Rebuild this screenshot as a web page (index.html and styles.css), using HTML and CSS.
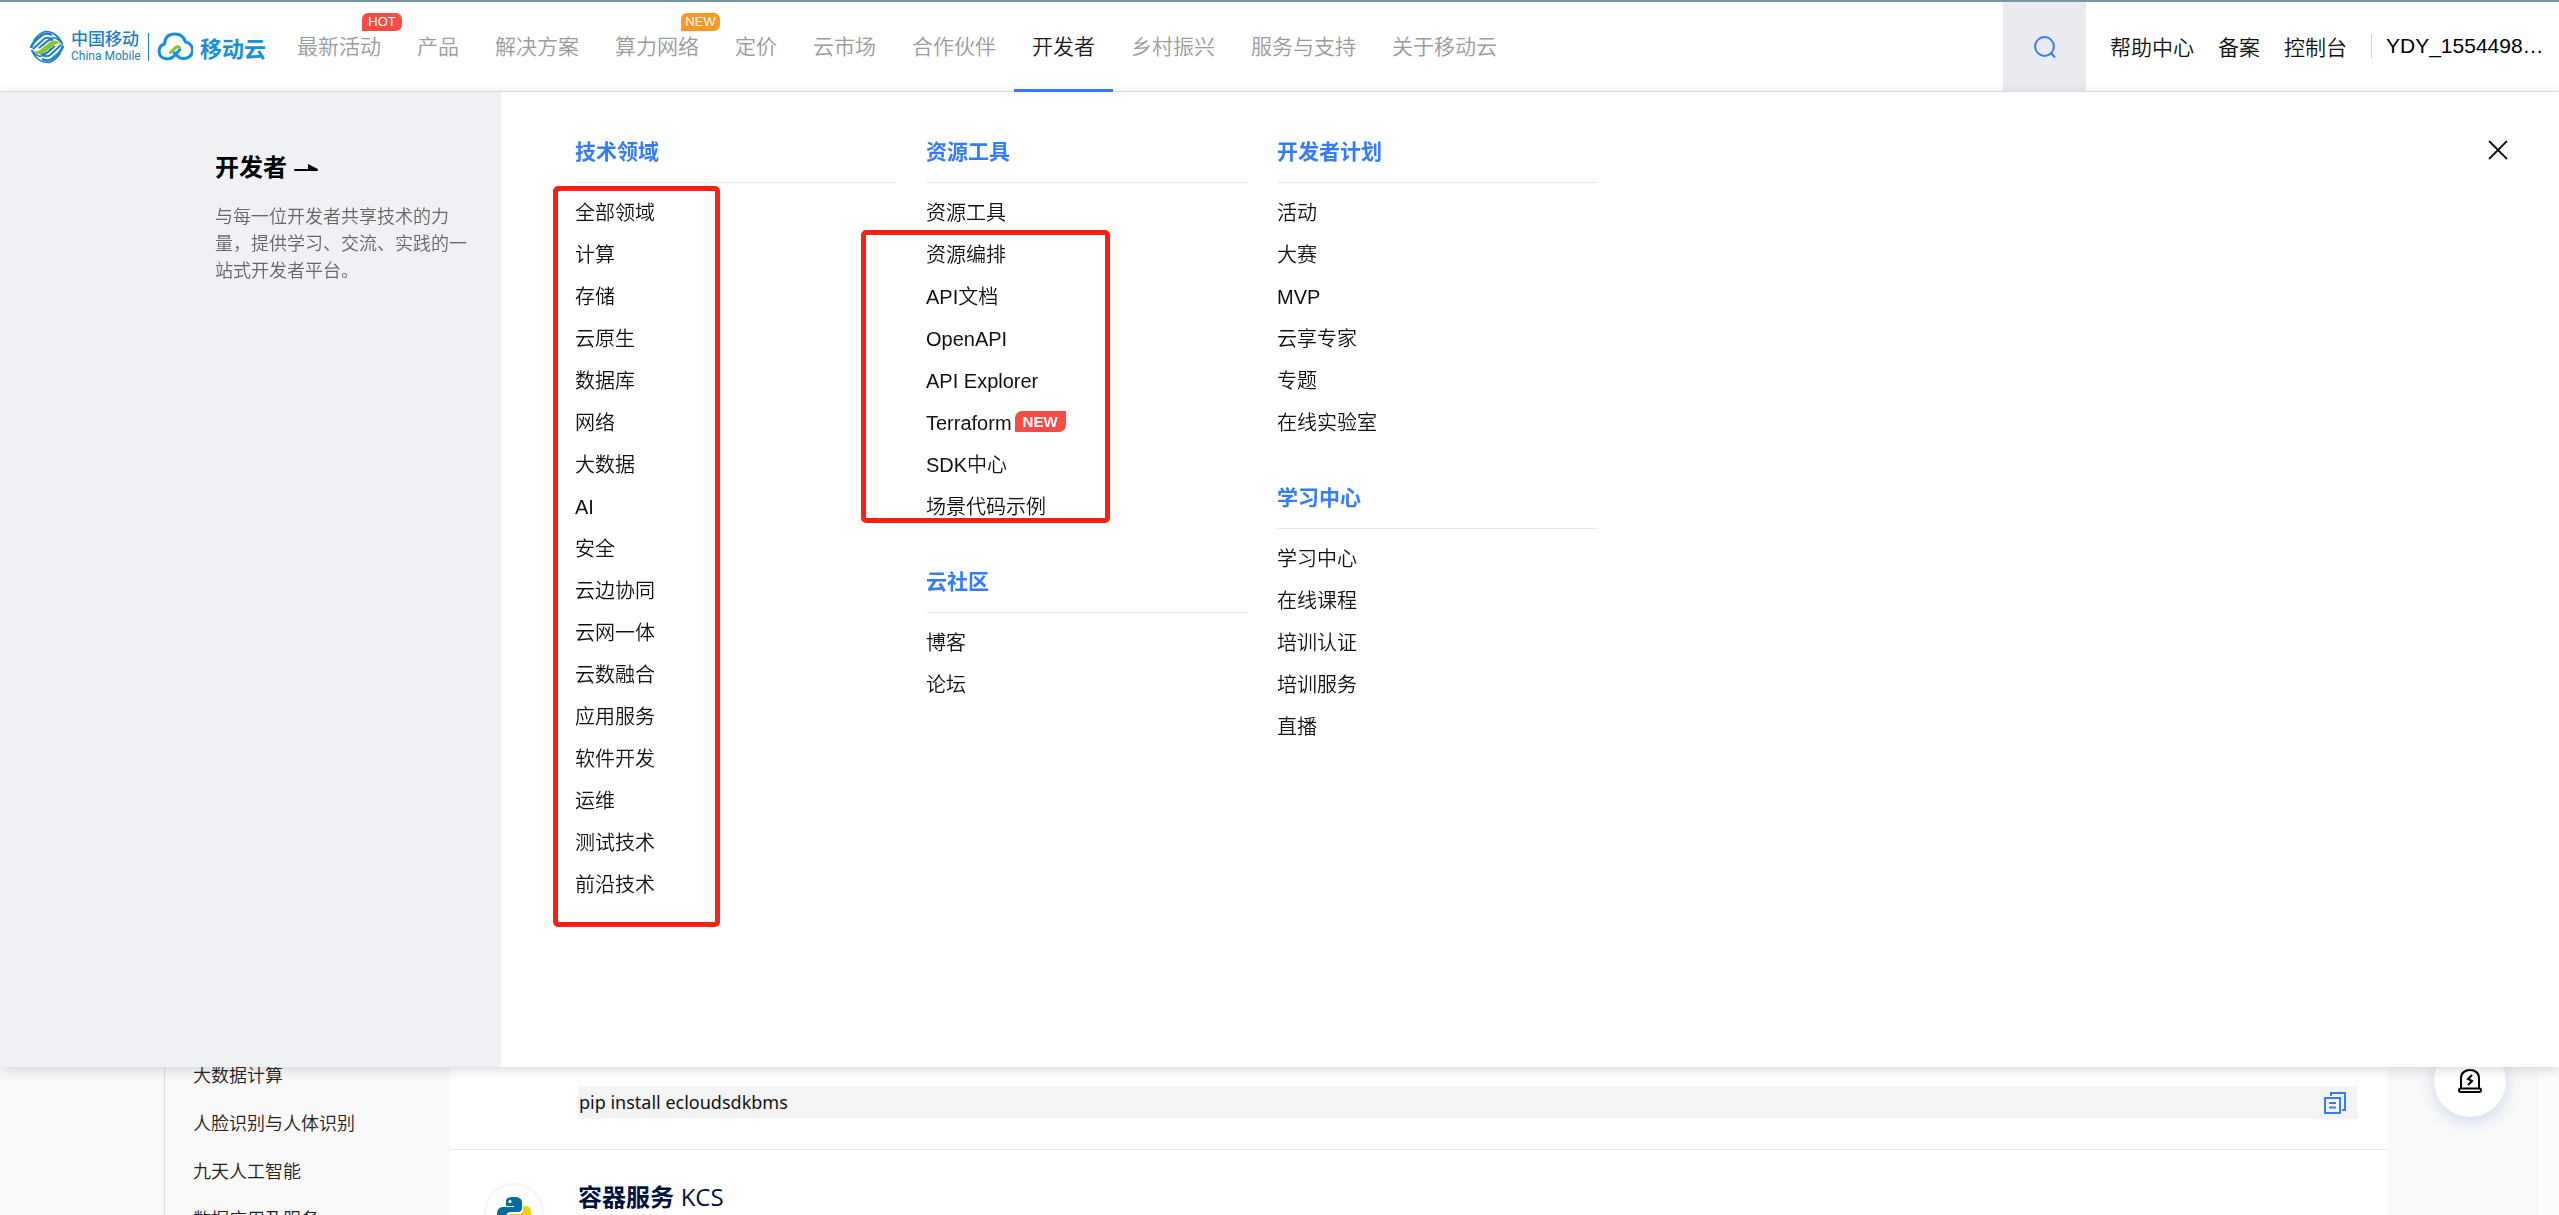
FILE: index.html
```html
<!DOCTYPE html>
<html lang="zh-CN">
<head>
<meta charset="utf-8">
<title>移动云 - 开发者</title>
<link rel="stylesheet" href="styles.css">
</head>
<body>
<header class="header">
  <a class="logo" href="#" aria-label="中国移动 移动云">
    <svg class="logo-mobile" viewBox="0 0 34 34" aria-hidden="true">
      <g fill="none" stroke="#1b80c6">
        <path d="M3.500 11 Q9 3 15 1.500 Q21 1 26 5 Q30 8 32.500 14 Q29 9 25 8 Q22 7 19 10 L12 16" stroke-width="1.500"/>
        <path d="M1 18 Q2 14 6 10 L12 5 Q17 2 22 5" stroke-width="2.600"/>
        <path d="M3 19 L14 9 Q18 6 23 10 Q19 9 16 12 L9 18" stroke-width="2"/>
        <path d="M24 4 Q30 9 33 16" stroke-width="1.200"/>
        <path d="M30.500 23 Q25 31 19 32.500 Q13 33 8 29 Q4 26 1.500 20 Q5 25 9 26 Q12 27 15 24 L22 18" stroke-width="1.500"/>
        <path d="M33 16 Q32 20 28 24 L22 29 Q17 32 12 29" stroke-width="2.600"/>
        <path d="M31 15 L20 25 Q16 28 11 24 Q15 25 18 22 L25 16" stroke-width="2"/>
      </g>
      <path d="M2 19 Q6 24 11 19 L20 12 Q26 8 32 14 Q27 12 23 16 L14 23 Q7 27 2 19Z" fill="#8cc32c"/>
    </svg>
    <span class="logo-names"><span class="logo-cn">中国移动</span><span class="logo-en">China Mobile</span></span>
    <span class="logo-line"></span>
    <svg class="logo-cloud" viewBox="0 0 36 29" aria-hidden="true">
      <g fill="none" stroke-width="3" stroke-linecap="round" stroke-linejoin="round">
        <path d="M14 26 Q11 27.500 8 26.500 A7.500 7.500 0 0 1 7.500 12 Q8 2 18 2 Q26 2 28.500 10 A8.300 8.300 0 0 1 27 26.500 Q23 27 20 23.500 L17 20.500" stroke="#1590dc"/>
        <path d="M13 26.500 Q15.500 26 18 23 L23 17.500" stroke="#1590dc"/>
        <path d="M13.500 20.500 L18 16 Q20 14 22.500 15.500" stroke="#8cc32c"/>
      </g>
    </svg>
    <span class="logo-yun">移动云</span>
  </a>
  <nav class="nav">
    <a href="#">最新活动<span class="tag tag-hot">HOT</span></a>
    <a href="#">产品</a>
    <a href="#">解决方案</a>
    <a href="#">算力网络<span class="tag tag-new">NEW</span></a>
    <a href="#">定价</a>
    <a href="#">云市场</a>
    <a href="#">合作伙伴</a>
    <a href="#" class="active">开发者</a>
    <a href="#">乡村振兴</a>
    <a href="#">服务与支持</a>
    <a href="#">关于移动云</a>
  </nav>
  <button class="search" type="button" aria-label="搜索">
    <svg width="22" height="22" viewBox="0 0 22 22" fill="none" stroke="#347cff" stroke-width="2" aria-hidden="true"><circle cx="10.500" cy="10.500" r="9.400"/><path d="M16.500 16.500 L21 21.500"/></svg>
  </button>
  <div class="tools">
    <a href="#">帮助中心</a>
    <a href="#">备案</a>
    <a href="#">控制台</a>
    <a href="#" class="user">YDY_1554498…</a>
  </div>
</header>

<section class="menu">
  <aside class="intro">
    <h2><a href="#">开发者 <svg width="26" height="10" viewBox="0 0 26 10" aria-hidden="true"><path d="M2 6 H25 L15 1 V6" fill="#000"/><path d="M2 7 H24" stroke="#000" stroke-width="2" stroke-linecap="round"/></svg></a></h2>
    <p>与每一位开发者共享技术的力量，提供学习、交流、实践的一站式开发者平台。</p>
  </aside>
  <div class="columns">
    <div class="column">
      <section class="group">
        <h3>技术领域</h3>
        <ul>
          <li><a href="#">全部领域</a></li>
          <li><a href="#">计算</a></li>
          <li><a href="#">存储</a></li>
          <li><a href="#">云原生</a></li>
          <li><a href="#">数据库</a></li>
          <li><a href="#">网络</a></li>
          <li><a href="#">大数据</a></li>
          <li><a href="#">AI</a></li>
          <li><a href="#">安全</a></li>
          <li><a href="#">云边协同</a></li>
          <li><a href="#">云网一体</a></li>
          <li><a href="#">云数融合</a></li>
          <li><a href="#">应用服务</a></li>
          <li><a href="#">软件开发</a></li>
          <li><a href="#">运维</a></li>
          <li><a href="#">测试技术</a></li>
          <li><a href="#">前沿技术</a></li>
        </ul>
      </section>
      <span class="mark mark-fields"></span>
    </div>
    <div class="column">
      <section class="group">
        <h3>资源工具</h3>
        <ul>
          <li><a href="#">资源工具</a></li>
          <li><a href="#">资源编排</a></li>
          <li><a href="#">API文档</a></li>
          <li><a href="#">OpenAPI</a></li>
          <li><a href="#">API Explorer</a></li>
          <li><a href="#">Terraform</a><span class="flag">NEW</span></li>
          <li><a href="#">SDK中心</a></li>
          <li><a href="#">场景代码示例</a></li>
        </ul>
      </section>
      <section class="group">
        <h3>云社区</h3>
        <ul>
          <li><a href="#">博客</a></li>
          <li><a href="#">论坛</a></li>
        </ul>
      </section>
      <span class="mark mark-tools"></span>
    </div>
    <div class="column">
      <section class="group">
        <h3>开发者计划</h3>
        <ul>
          <li><a href="#">活动</a></li>
          <li><a href="#">大赛</a></li>
          <li><a href="#">MVP</a></li>
          <li><a href="#">云享专家</a></li>
          <li><a href="#">专题</a></li>
          <li><a href="#">在线实验室</a></li>
        </ul>
      </section>
      <section class="group">
        <h3>学习中心</h3>
        <ul>
          <li><a href="#">学习中心</a></li>
          <li><a href="#">在线课程</a></li>
          <li><a href="#">培训认证</a></li>
          <li><a href="#">培训服务</a></li>
          <li><a href="#">直播</a></li>
        </ul>
      </section>
    </div>
  </div>
  <button class="close" type="button" aria-label="关闭">
    <svg width="20" height="20" viewBox="0 0 20 20" fill="none" stroke="#111" stroke-width="1.800" aria-hidden="true"><path d="M1 1 L19 19 M19 1 L1 19"/></svg>
  </button>
</section>

<div class="page">
  <nav class="side">
    <a href="#">大数据计算</a>
    <a href="#">人脸识别与人体识别</a>
    <a href="#">九天人工智能</a>
    <a href="#">数据应用及服务</a>
  </nav>
  <main class="content">
    <div class="install">
      <code>pip install ecloudsdkbms</code>
      <button type="button" aria-label="复制">
        <svg width="22" height="22" viewBox="0 0 22 22" fill="none" stroke="#347cff" stroke-width="2" aria-hidden="true"><path d="M7 4 V1 H21 V18 H18"/><rect x="1" y="6" width="15" height="15"/><path d="M5 11 H12 M5 15.500 H12" stroke-width="1.800"/></svg>
      </button>
    </div>
    <article class="product">
      <span class="avatar">
        <svg width="34" height="34" viewBox="0 0 34 34" aria-hidden="true">
          <path d="M17 1 C9 1 9 4 9 6 V10 H17 V11 H6 C2 11 0 14 0 18 C0 23 3 25 6 25 H9 V21 C9 18 11 16 14 16 H21 C24 16 25 14 25 12 V6 C25 3 22 1 17 1Z" fill="#0a6c9c"/>
          <circle cx="13" cy="5.500" r="1.600" fill="#fff"/>
          <path d="M17 34 C25 34 25 31 25 28 V25 H17 V24 H28 C32 24 34 21 34 17 C34 12 32 10 28 10 H26 V13 C26 16 24 18 21 18 H14 C11 18 9 20 9 22 V28 C9 32 12 34 17 34Z" fill="#ffcb05"/>
        </svg>
      </span>
      <h2>容器服务 <span>KCS</span></h2>
    </article>
  </main>
</div>
<button class="alarm" type="button" aria-label="公告">
  <svg width="26" height="26" viewBox="0 0 26 26" fill="none" stroke="#000" stroke-width="2" aria-hidden="true"><path d="M4 20 V10 C4 5 8 2 13 2 S22 5 22 10 V20"/><rect x="2" y="20.500" width="22" height="3.500" rx="1.700"/><path d="M15 7 L11 11 L15 13 L11 17"/></svg>
</button>
</body>
</html>
```
FILE: styles.css
```css
* { box-sizing: border-box; }
body {
  margin: 0;
  height: 100vh;
  overflow: hidden;
  background: #f9f9f9;
  color: #111;
  font-family: "Liberation Sans", "Noto Sans CJK SC", sans-serif;
  font-size: 20px;
  display: flex;
  flex-direction: column;
}
a { color: inherit; text-decoration: none; }
button { border: 0; padding: 0; background: none; cursor: pointer; }
ul { list-style: none; margin: 0; padding: 0; }
svg { display: block; }

/* top bar */
.header {
  flex: none;
  height: 92px;
  display: flex;
  background: #fff;
  border-top: 2px solid #7b96a3;
  border-bottom: 1px solid #e2e3e5;
  font-size: 21px;
  font-weight: 350;
}
.logo {
  width: 279px;
  padding: 0 0 0 30px;
  display: flex;
  align-items: center;
  color: #1b80c6;
  font-weight: 500;
}
.logo-mobile { width: 34px; height: 34px; }
.logo-names { margin-left: 7px; display: flex; flex-direction: column; width: 69px; white-space: nowrap; }
.logo-cn { font-size: 17px; line-height: 18px; }
.logo-en { font-family: Roboto, sans-serif; font-size: 12px; font-weight: 400; line-height: 14px; }
.logo-line { width: 1px; height: 28px; margin: 0 8px; background: #1b80c6; }
.logo-cloud { width: 36px; height: 29px; }
.logo-yun { margin-left: 7px; color: #1590dc; font-size: 22px; font-weight: 700; white-space: nowrap; }
.nav { display: flex; flex: 1; color: #999b9c; white-space: nowrap; }
.nav a { position: relative; padding: 0 18px; line-height: 90px; height: 90px; }
.nav .active { color: #1a1a1a; border-bottom: 3px solid #347cff; }
.tag {
  position: absolute;
  top: 11px;
  right: -3px;
  width: 40px;
  height: 18px;
  border-radius: 6px 6px 6px 0;
  color: #fff;
  font-size: 13px;
  font-weight: 400;
  line-height: 18px;
  text-align: center;
}
.tag-hot { background: #f64c45; }
.tag-new { width: 39px; background: #ff9722; }
.search { width: 83px; background: #eaebf0; display: flex; align-items: center; justify-content: center; }
.tools { display: flex; align-items: center; gap: 24px; padding: 0 15px 2px 24px; white-space: nowrap; }
.tools .user {
  width: 173px;
  height: 24px;
  line-height: 24px;
  padding-left: 14px;
  border-left: 1px solid #d8d8d8;
  color: #000;
}

/* drop-down panel */
.menu {
  position: relative;
  z-index: 2;
  flex: none;
  height: 975px;
  display: flex;
  background: #fff;
  box-shadow: 0 3px 12px rgba(0, 0, 0, .14);
}
.intro { width: 501px; padding: 58px 32px 0 215px; background: #eff1f5; }
.intro h2 { margin: 0; font-size: 24px; line-height: 36px; color: #000; }
.intro h2 a { display: flex; align-items: center; gap: 6px; }
.intro p { margin: 18px 0 0; font-size: 18px; font-weight: 350; line-height: 27px; color: #666; }
.columns { display: flex; gap: 30px; padding: 30px 0 0 74px; }
.column { position: relative; width: 321px; }
.group + .group { margin-top: 24px; }
.group h3 {
  margin: 0 0 9px;
  height: 61px;
  line-height: 60px;
  border-bottom: 1px solid #e9eaec;
  color: #347cff;
  font-size: 21px;
}
.group li { display: flex; gap: 3px; height: 42px; line-height: 42px; font-weight: 350; }
.flag {
  width: 51px;
  height: 21px;
  margin-top: 9px;
  border-radius: 7px 0 7px 0;
  background: #f64c45;
  color: #fff;
  font-size: 15px;
  font-weight: 700;
  line-height: 21px;
  text-align: center;
}
.mark { position: absolute; border: 5px solid #ff1f10; border-radius: 5px; pointer-events: none; }
.mark-fields { left: -22px; top: 64px; width: 167px; height: 741px; }
.mark-tools { left: -65px; top: 108px; width: 249px; height: 293px; }
.close { position: absolute; right: 51px; top: 48px; }

/* page underneath */
.page { flex: 1; min-height: 0; display: flex; padding-right: 150px; border-right: 21px solid #fcfcfc; }
.side {
  width: 286px;
  margin-left: 164px;
  padding: 0 0 0 28px;
  margin-top: -15px;
  border-left: 1px solid #dcdddf;
  display: flex;
  flex-direction: column;
  font-size: 18px;
  font-weight: 350;
  color: #222;
}
.side a { flex: none; line-height: 48px; }
.content { flex: 1; background: #fff; overflow: hidden; }
.install {
  margin: 19px 30px 30px 128px;
  height: 33px;
  padding: 0 12px 0 1px;
  display: flex;
  align-items: center;
  justify-content: space-between;
  background: #f4f4f4;
}
.install code { font: 18px/30px "Noto Sans", sans-serif; padding-bottom: 2px; }
.product { border-top: 1px solid #ebebeb; display: flex; padding: 33px 0 0 34px; gap: 34px; }
.avatar {
  width: 60px;
  height: 60px;
  border: 2px solid #f6f6f6;
  border-radius: 50%;
  display: flex;
  align-items: center;
  justify-content: center;
}
.product h2 { margin: 0; font-size: 24px; line-height: 28px; color: #00103f; }
.product h2 span { font-family: "Open Sans", sans-serif; font-weight: 400; }
.alarm {
  position: fixed;
  right: 53px;
  bottom: 98px;
  width: 72px;
  height: 72px;
  border-radius: 50%;
  background: #fff;
  display: flex;
  align-items: center;
  justify-content: center;
  box-shadow: 0 4px 16px rgba(80, 120, 220, .25);
}
```
